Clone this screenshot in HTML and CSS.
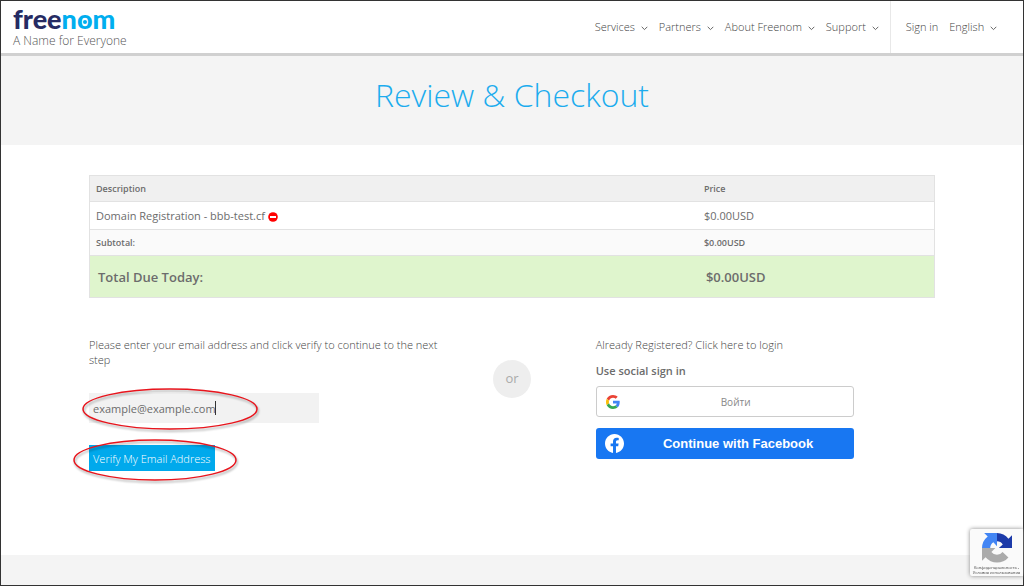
FILE: index.html
```html
<!DOCTYPE html>
<html lang="en">
<head>
  <meta charset="UTF-8">
  <meta name="viewport" content="width=device-width, initial-scale=1.0">
  <title>Freenom - Review &amp; Checkout</title>
  <link rel="stylesheet" href="styles.css">
</head>
<body>
  <header class="header">
    <a class="brand" href="#">
      <span class="logo">free<span class="logo-nom">n<span class="logo-o">o</span>m</span></span>
      <span class="tagline">A Name for Everyone</span>
    </a>
    <nav class="nav">
      <a href="#">Services <svg class="chevron" viewBox="0 0 7 5"><path d="M.7 .8 3.5 3.6 6.3 .8"/></svg></a>
      <a href="#">Partners <svg class="chevron" viewBox="0 0 7 5"><path d="M.7 .8 3.5 3.6 6.3 .8"/></svg></a>
      <a href="#">About Freenom <svg class="chevron" viewBox="0 0 7 5"><path d="M.7 .8 3.5 3.6 6.3 .8"/></svg></a>
      <a href="#">Support <svg class="chevron" viewBox="0 0 7 5"><path d="M.7 .8 3.5 3.6 6.3 .8"/></svg></a>
    </nav>
    <nav class="nav nav-user">
      <a href="#">Sign in</a>
      <a href="#">English <svg class="chevron" viewBox="0 0 7 5"><path d="M.7 .8 3.5 3.6 6.3 .8"/></svg></a>
    </nav>
  </header>

  <section class="title-bar">
    <h1>Review &amp; Checkout</h1>
  </section>

  <main class="container">
    <table class="cart">
      <thead>
        <tr><th>Description</th><th class="price">Price</th></tr>
      </thead>
      <tbody>
        <tr class="item">
          <td>Domain Registration - bbb-test.cf <button class="remove" type="button" aria-label="Remove"><svg viewBox="0 0 10 10"><circle cx="5" cy="5" r="4.8" fill="#f00"/><rect x="2" y="4" width="6" height="2" fill="#fff"/></svg></button></td>
          <td>$0.00USD</td>
        </tr>
        <tr class="subtotal"><td>Subtotal:</td><td>$0.00USD</td></tr>
        <tr class="total"><td>Total Due Today:</td><td>$0.00USD</td></tr>
      </tbody>
    </table>

    <div class="checkout">
      <form class="verify">
        <label for="email">Please enter your email address and click verify to continue to the next step</label>
        <div class="field">
          <input type="email" id="email" value="example@example.com">
          <span class="caret"></span>
          <svg class="ring ring-email" viewBox="0 0 176 42"><ellipse cx="88" cy="21" rx="87" ry="20"/></svg>
        </div>
        <div class="field">
          <button class="verify-btn" type="button">Verify My Email Address</button>
          <svg class="ring ring-verify" viewBox="0 0 164 42"><ellipse cx="82" cy="21" rx="81" ry="20"/></svg>
        </div>
      </form>

      <div class="or">or</div>

      <div class="social">
        <p>Already Registered? <a href="#">Click here to login</a></p>
        <h2>Use social sign in</h2>
        <button class="social-btn google" type="button">
          <svg viewBox="0 0 48 48">
            <path fill="#EA4335" d="M24 9.5c3.54 0 6.71 1.22 9.21 3.6l6.85-6.85C35.9 2.38 30.47 0 24 0 14.62 0 6.51 5.38 2.56 13.22l7.98 6.19C12.43 13.72 17.74 9.5 24 9.5z"/>
            <path fill="#4285F4" d="M46.98 24.55c0-1.57-.15-3.09-.38-4.55H24v9.02h12.94c-.58 2.96-2.26 5.48-4.78 7.18l7.73 6c4.51-4.18 7.09-10.36 7.09-17.65z"/>
            <path fill="#FBBC05" d="M10.53 28.59c-.48-1.45-.76-2.99-.76-4.59s.27-3.14.76-4.59l-7.98-6.19C.92 16.46 0 20.12 0 24s.92 7.54 2.56 10.78l7.97-6.19z"/>
            <path fill="#34A853" d="M24 48c6.48 0 11.93-2.13 15.89-5.81l-7.73-6c-2.15 1.45-4.92 2.3-8.16 2.3-6.26 0-11.57-4.22-13.47-9.91l-7.98 6.19C6.51 42.62 14.62 48 24 48z"/>
          </svg>
          <span>Войти</span>
        </button>
        <button class="social-btn facebook" type="button">
          <svg viewBox="0 0 24 24"><path fill="#fff" d="M24 12.07C24 5.4 18.63 0 12 0S0 5.4 0 12.07c0 6.03 4.39 11.02 10.13 11.93v-8.44H7.08v-3.49h3.05V9.41c0-3.02 1.79-4.69 4.53-4.69 1.31 0 2.68.24 2.68.24v2.97h-1.51c-1.49 0-1.96.93-1.96 1.88v2.26h3.33l-.53 3.49h-2.8V24C19.61 23.09 24 18.1 24 12.07z"/></svg>
          <span>Continue with Facebook</span>
        </button>
      </div>
    </div>
  </main>

  <footer class="footer"></footer>

  <div class="recaptcha">
    <svg viewBox="0 0 64 64">
      <path fill="#1c3aa9" d="M64 32V4.6l-7.6 7.6A32 32 0 0 0 32 0v17.5a15 15 0 0 1 12.3 6.8L36 32z"/>
      <path fill="#4285f4" d="M32 0H4.6l7.6 7.6A32 32 0 0 0 0 32h17.5a15 15 0 0 1 6.8-12.3L32 28z"/>
      <path fill="#ababab" d="M0 32v27.4l7.6-7.6A32 32 0 0 0 56.4 52L43.9 40.5A15 15 0 0 1 20 40.5L28.5 32z"/>
    </svg>
    <p>Конфиденциальность - Условия использования</p>
  </div>
</body>
</html>
```
FILE: styles.css
```css
* { box-sizing: border-box; }
body {
  display: flex;
  flex-direction: column;
  min-height: 100vh;
  margin: 0;
  border: 1px solid #333;
  background: #fff;
  color: #6c6c6c;
  font-family: "Open Sans", sans-serif;
  font-size: 11px;
}
a { color: inherit; text-decoration: none; }
button, input { font-family: inherit; }

.header {
  display: flex;
  height: 55px;
  padding: 0 26px 0 12px;
  border-bottom: 3px solid #d0d0d0;
}
.brand {
  display: flex;
  flex-direction: column;
  margin-right: auto;
  padding-top: 2px;
}
.logo {
  color: #262b63;
  font-family: Lato, sans-serif;
  font-size: 27px;
  font-weight: 900;
  line-height: 32px;
}
.logo-nom { color: #00aeef; }
.logo-o { position: relative; }
.logo-o::after {
  content: "";
  position: absolute;
  left: 50%;
  top: 60%;
  width: 4px;
  height: 4px;
  margin: -2px;
  border-radius: 50%;
  background: #00aeef;
}
.tagline {
  color: #555;
  font-size: 12px;
  font-weight: 300;
  line-height: 12px;
}
.nav {
  display: flex;
  align-items: center;
  gap: 11px;
  padding-right: 11px;
  padding-bottom: 1px;
  color: #444;
  font-weight: 300;
}
.nav-user {
  padding-right: 0;
  padding-left: 15px;
  border-left: 1px solid #e8e8e8;
}
.chevron {
  width: 7px;
  height: 5px;
  margin-left: 3px;
  vertical-align: middle;
  fill: none;
  stroke: #666;
}

.title-bar {
  height: 89px;
  background: #f4f4f4;
  text-align: center;
}
h1 {
  margin: 0;
  color: #1cacee;
  font-size: 32px;
  font-weight: 300;
  line-height: 78px;
}

.container {
  flex: 1;
  width: 100%;
  max-width: 846px;
  margin: 0 auto;
  padding: 30px 0;
}
.cart {
  width: 100%;
  border: 1px solid #e2e2e2;
  border-collapse: collapse;
}
.cart th, .cart td {
  height: 26px;
  padding: 0 6px;
  border-bottom: 1px solid #e2e2e2;
  text-align: left;
}
.cart th { background: #f0f0f0; font-size: 9px; font-weight: 600; }
.cart .price { width: 28%; }
.cart .item td { height: 28px; font-size: 11px; }
.cart .subtotal td { background: #fafafa; font-size: 9px; font-weight: 600; }
.cart .total td {
  height: 42px;
  padding: 0 8px;
  background: #dff5cd;
  font-size: 13px;
  font-weight: 600;
}
.remove {
  padding: 0;
  border: 0;
  background: none;
  vertical-align: middle;
}
.remove svg { display: block; width: 10px; height: 10px; }

.checkout {
  display: grid;
  grid-template-columns: 42% 16% 1fr;
  margin-top: 39px;
  color: #444;
  font-weight: 300;
  line-height: 15px;
}
.verify label { display: block; }
.field { position: relative; }
.verify input {
  width: 230px;
  height: 30px;
  margin: 26px 0 22px;
  padding: 0 4px;
  border: 0;
  outline: none;
  background: #f2f2f2;
  color: #6c6c6c;
  font-size: 11px;
}
.caret {
  position: absolute;
  left: 126px;
  top: 34px;
  width: 1px;
  height: 14px;
  background: #333;
}
.verify-btn {
  height: 26px;
  padding: 0 4px;
  border: 0;
  background: #00a9ec;
  color: #fff;
  font-size: 11px;
  font-weight: 300;
}
.ring {
  position: absolute;
  fill: none;
  stroke: #e8141c;
  stroke-width: 1.5;
  filter: drop-shadow(1px 2px 1px rgba(0,0,0,0.35));
  pointer-events: none;
}
.ring-email { left: -7px; top: 21px; width: 176px; height: 42px; }
.ring-verify { left: -16px; top: -6px; width: 164px; height: 42px; }
.or {
  width: 38px;
  height: 38px;
  margin: 23px auto 0;
  border-radius: 50%;
  background: #eee;
  color: #aaa;
  font-size: 13px;
  font-weight: 400;
  line-height: 36px;
  text-align: center;
}
.social { padding-left: 16px; }
.social p { margin: 0; }
.social h2 {
  margin: 11px 0 8px;
  color: #6c6c6c;
  font-size: 11px;
  font-weight: 600;
}
.social-btn {
  display: flex;
  align-items: center;
  width: 76%;
  height: 31px;
  padding: 0 9px;
  border-radius: 3px;
}
.social-btn span {
  flex: 1;
  padding-left: 8px;
  text-align: center;
}
.google {
  margin-bottom: 11px;
  border: 1px solid #ccc;
  background: #fff;
  color: #888;
  font-size: 10px;
}
.google svg { width: 14px; height: 14px; }
.facebook {
  border: 0;
  background: #1877f2;
  color: #fff;
  font-family: "Liberation Sans", Arial, sans-serif;
  font-size: 13px;
  font-weight: bold;
}
.facebook svg { width: 19px; height: 19px; }

.footer { height: 30px; background: #f4f4f4; }
.recaptcha {
  position: fixed;
  right: 1px;
  bottom: 10px;
  width: 53px;
  height: 47px;
  padding-top: 4px;
  border-radius: 2px 0 0 2px;
  background: #fafafa;
  box-shadow: 0 0 4px #888;
  text-align: center;
}
.recaptcha svg { display: block; width: 30px; height: 30px; margin: 0 auto; }
.recaptcha p {
  margin: 2px 0 0;
  color: #444;
  font-size: 4px;
  line-height: 5px;
}
```
